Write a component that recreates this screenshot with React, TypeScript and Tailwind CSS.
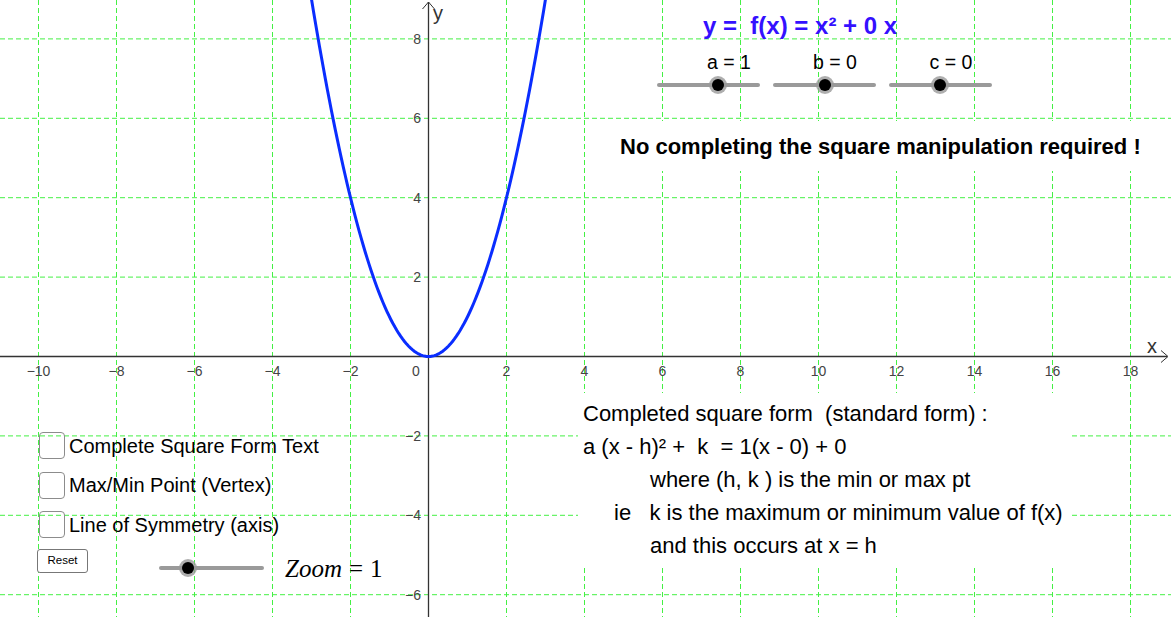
import React from 'react'

// graph mapping: origin and pixels per unit
const OX = 428.5
const OY = 356.5
const SX = 39
const SY = 39.7

const px = (u: number) => OX + u * SX
const py = (v: number) => OY - v * SY

const xTicks = [-10, -8, -6, -4, -2, 2, 4, 6, 8, 10, 12, 14, 16, 18]
const yTicks = [8, 6, 4, 2, -2, -4, -6]

function curvePath() {
    const pts: string[] = []
    for (let i = 0; i <= 120; i++) {
        const u = -3.05 + (6.1 * i) / 120
        pts.push(`${i === 0 ? 'M' : 'L'}${px(u).toFixed(2)},${py(u * u).toFixed(2)}`)
    }
    return pts.join(' ')
}

function Graph() {
    return (
        <svg className="absolute inset-0" width={1171} height={617} viewBox="0 0 1171 617">
            {xTicks.map((t) => (
                <line key={'vx' + t} x1={px(t)} y1={0} x2={px(t)} y2={617} stroke="#44f044" strokeWidth={1} strokeDasharray="5 3" />
            ))}
            {yTicks.map((t) => (
                <line key={'hy' + t} x1={0} y1={py(t)} x2={1171} y2={py(t)} stroke="#44f044" strokeWidth={1} strokeDasharray="5 3" />
            ))}

            {/* axes */}
            <line x1={0} y1={OY} x2={1167} y2={OY} stroke="#333" strokeWidth={1.3} />
            <line x1={OX} y1={2} x2={OX} y2={617} stroke="#333" strokeWidth={1.3} />
            <path d={`M1161,${OY - 6} L1168,${OY} L1161,${OY + 6}`} fill="none" stroke="#333" strokeWidth={1} />
            <path d={`M${OX - 6},9 L${OX},2 L${OX + 6},9`} fill="none" stroke="#333" strokeWidth={1} />

            <g fontFamily="'Liberation Sans', Arial, sans-serif" fontSize={14} fill="#444">
                {xTicks.map((t) => (
                    <text key={'lx' + t} x={px(t)} y={376} textAnchor="middle">
                        {t < 0 ? '\u2212' + Math.abs(t) : t}
                    </text>
                ))}
                <text x={416} y={376} textAnchor="middle">0</text>
                {yTicks.map((t) => (
                    <text key={'ly' + t} x={421} y={py(t) + 5} textAnchor="end">
                        {t < 0 ? '\u2212' + Math.abs(t) : t}
                    </text>
                ))}
            </g>
            <g fontFamily="'Liberation Sans', Arial, sans-serif" fontSize={20} fill="#333">
                <text x={1147} y={353}>x</text>
                <text x={433} y={20}>y</text>
            </g>

            <path d={curvePath()} fill="none" stroke="#0a2dff" strokeWidth={3} strokeLinejoin="round" />
        </svg>
    )
}

function Slider({ width, knob }: { width: number; knob: number }) {
    return (
        <div className="relative h-[20px]" style={{ width }}>
            <div className="absolute left-0 right-0 top-[8px] h-[4px] rounded-full bg-[#9a9a9a]" />
            <div
                className="absolute top-[1px] h-[18px] w-[18px] rounded-full bg-[#9a9a9a]/80 flex items-center justify-center"
                style={{ left: knob - 9 }}
            >
                <div className="h-[12px] w-[12px] rounded-full bg-black" />
            </div>
        </div>
    )
}

function CheckRow({ label }: { label: string }) {
    return (
        <div className="flex items-center gap-[4px] h-[27px]">
            <div className="h-[27px] w-[26px] rounded-[4px] border-[1.5px] border-[#8c8c8c]" />
            <span className="text-[20px] text-black leading-none">{label}</span>
        </div>
    )
}

export default function App() {
    return (
        <div className="relative w-[1171px] h-[617px] overflow-hidden bg-white font-['Liberation_Sans',Arial,sans-serif]">
            <Graph />

            {/* function title */}
            <div className="absolute left-[703px] top-[14px] text-[24px] font-bold text-[#3410ff] whitespace-pre leading-none">
                y =  f(x) = x² + 0 x
            </div>

            {/* coefficient sliders */}
            <div className="absolute left-[657px] top-[53px] flex gap-[13px]">
                {[
                    { label: 'a = 1', knob: 61, pad: 'pl-[41px]' },
                    { label: 'b = 0', knob: 52, pad: 'pl-[21px]' },
                    { label: 'c = 0', knob: 51, pad: 'pl-[21px]' },
                ].map((s) => (
                    <div key={s.label} className="flex flex-col">
                        <span className={`text-[19.5px] leading-none text-black mb-[2.5px] w-full text-center whitespace-nowrap ${s.pad}`}>
                            {s.label}
                        </span>
                        <Slider width={103} knob={s.knob} />
                    </div>
                ))}
            </div>

            <div className="absolute left-[615px] top-[121px] h-[50px] w-[540px] bg-white flex items-center pl-[5px]">
                <span className="text-[22px] font-bold text-black whitespace-nowrap">No completing the square manipulation required !</span>
            </div>

            {/* checkboxes */}
            <div className="absolute left-[39px] top-[432px] flex flex-col gap-[12.5px]">
                <CheckRow label="Complete Square Form Text" />
                <CheckRow label="Max/Min Point (Vertex)" />
                <CheckRow label="Line of Symmetry (axis)" />
            </div>

            <div className="absolute left-[37px] top-[549px] flex items-start">
                <button className="h-[24px] w-[51px] rounded-[3px] border border-[#777] bg-white text-[11.5px] text-black">
                    Reset
                </button>
                <div className="ml-[71px] mt-[9px]">
                    <Slider width={105} knob={29} />
                </div>
                <span className="ml-[21px] mt-[7px] flex items-baseline text-[25px] leading-none text-black whitespace-nowrap font-['Liberation_Serif','Times_New_Roman',serif]">
                    <i>Zoom</i>
                    <span className="ml-[7px]">=</span>
                    <span className="ml-[7px]">1</span>
                </span>
            </div>

            {/* completed square text */}
            <div className="absolute left-[578px] top-[393px] w-[493px] h-[175px] bg-white pl-[5px] pt-[4px] text-[22px] text-black leading-[33px]">
                <div className="whitespace-pre">Completed square form  (standard form) :</div>
                <div className="whitespace-pre">a (x - h)² +  k  = 1(x - 0) + 0</div>
                <div className="pl-[67px] whitespace-nowrap">where (h, k ) is the min or max pt</div>
                <div className="pl-[31px] whitespace-pre">ie   k is the maximum or minimum value of f(x)</div>
                <div className="pl-[67px] whitespace-nowrap">and this occurs at x = h</div>
            </div>
        </div>
    )
}
